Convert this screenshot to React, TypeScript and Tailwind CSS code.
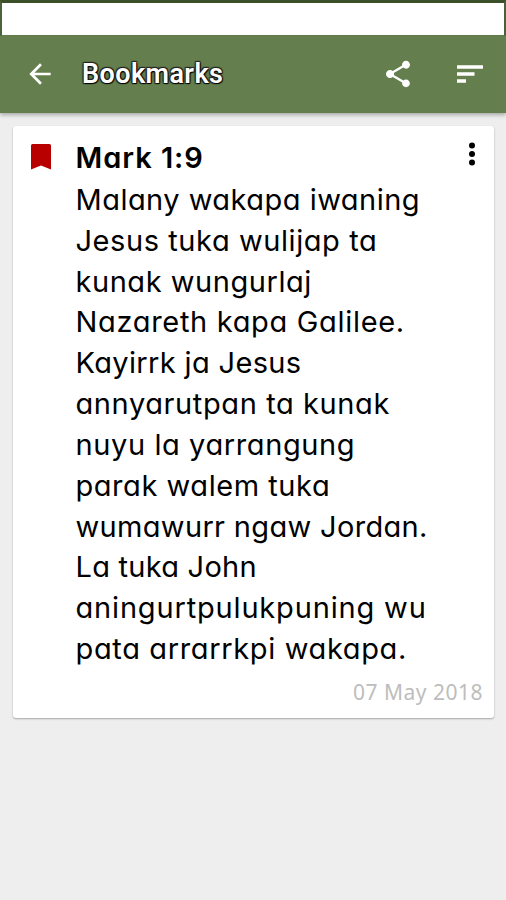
import { clsx } from "clsx";

const verseLines = [
  { text: "Malany wakapa iwaning", tracking: "tracking-[0.47px]" },
  { text: "Jesus tuka wulijap ta", tracking: "tracking-[0.57px]" },
  { text: "kunak wungurlaj", tracking: "tracking-[0.55px]" },
  { text: "Nazareth kapa Galilee.", tracking: "tracking-[0.68px]" },
  { text: "Kayirrk ja Jesus", tracking: "tracking-[0.35px]" },
  { text: "annyarutpan ta kunak", tracking: "tracking-[0.6px]" },
  { text: "nuyu la yarrangung", tracking: "tracking-[0.6px]" },
  { text: "parak walem tuka", tracking: "tracking-[0.55px]" },
  { text: "wumawurr ngaw Jordan.", tracking: "tracking-[0.33px]" },
  { text: "La tuka John", tracking: "tracking-[0.25px]" },
  { text: "aningurtpulukpuning wu", tracking: "tracking-[0.83px]" },
  { text: "pata arrarrkpi wakapa.", tracking: "tracking-[0.64px]" },
];

function Toolbar() {
  return (
    <header className="flex h-[77px] items-center bg-[#647f4d] pb-px text-white shadow-[0_2px_4px_rgba(0,0,0,0.3)]">
      <button aria-label="Back" className="ml-6 size-8">
        <svg viewBox="0 0 24 24" className="size-8" fill="currentColor">
          <path d="M20 11H7.83l5.59-5.59L12 4l-8 8 8 8 1.41-1.41L7.83 13H20v-2z" />
        </svg>
      </button>
      <h1 className="ml-[26px] font-['Roboto',sans-serif] text-[27px] leading-8 font-semibold tracking-[0.4px] [text-shadow:1px_1px_1px_#000,-1px_-1px_1px_#222,1px_-1px_1px_#222,-1px_1px_1px_#222]">
        Bookmarks
      </h1>
      <button aria-label="Share" className="mr-10 ml-auto size-8">
        <svg viewBox="0 0 24 24" className="size-8" fill="currentColor">
          <path d="M18 16.08c-.76 0-1.44.3-1.96.77L8.91 12.7c.05-.23.09-.46.09-.7s-.04-.47-.09-.7l7.05-4.11c.54.5 1.25.81 2.04.81 1.66 0 3-1.34 3-3s-1.34-3-3-3-3 1.34-3 3c0 .24.04.47.09.7L8.04 9.81C7.5 9.31 6.79 9 6 9c-1.66 0-3 1.34-3 3s1.34 3 3 3c.79 0 1.5-.31 2.04-.81l7.12 4.16c-.05.21-.08.43-.08.65 0 1.61 1.31 2.92 2.92 2.92s2.92-1.31 2.92-2.92-1.31-2.92-2.92-2.92z" />
        </svg>
      </button>
      <button aria-label="Sort" className="mr-5 size-8">
        <svg viewBox="0 0 32 32" className="size-8" fill="currentColor">
          <path d="M3 7.2h26v3.6H3zM3 14.2h17.5v3.6H3zM3 21.2h9v3.6H3z" />
        </svg>
      </button>
    </header>
  );
}

function BookmarkCard() {
  return (
    <article className="mr-3 ml-[13px] mt-[13px] flex h-[592px] rounded-[3px] bg-white shadow-[0_1px_2px_rgba(0,0,0,0.3)]">
      <svg viewBox="0 0 20 26" className="mt-[18px] ml-[18px] h-[26px] w-5 shrink-0" fill="#b90000">
        <path d="M0 1.5Q0 0 1.5 0H18.5Q20 0 20 1.5V25.5L10 21.5L0 25.5Z" />
      </svg>
      <div className="ml-[24.5px] flex min-w-0 flex-1 flex-col pt-[11px] font-['Inter','Noto_Sans',sans-serif] text-black [font-feature-settings:'cv11','ss03']">
        <div className="flex h-[43px]">
          <h2 className="text-[29px] leading-[42px] font-semibold tracking-[0.95px] whitespace-nowrap">Mark 1:9</h2>
          <button aria-label="More options" className="mt-[5px] mr-[18.5px] ml-auto h-6 w-2">
            <svg viewBox="0 0 8 24" className="h-6 w-2" fill="currentColor">
              <circle cx="4" cy="3.5" r="3" />
              <circle cx="4" cy="12" r="3" />
              <circle cx="4" cy="20.5" r="3" />
            </svg>
          </button>
        </div>
        <div>
          {verseLines.map((line) => (
            <p key={line.text} className={clsx("text-[29px] leading-[40.82px] whitespace-nowrap", line.tracking)}>
              {line.text}
            </p>
          ))}
        </div>
        <time className="mt-[8px] mr-[11px] self-end font-['Noto_Sans',sans-serif] text-[21px] leading-7 tracking-[0.5px] text-[#bdbdbd]">
          07 May 2018
        </time>
      </div>
    </article>
  );
}

export default function App() {
  return (
    <main className="h-[900px] w-[506px] overflow-hidden bg-[#eeeeee]">
      <div className="h-9 border-x-2 border-t-[3px] border-b border-x-[#49623a] border-t-[#3b5029] border-b-[#647f4d] bg-white" />
      <Toolbar />
      <BookmarkCard />
    </main>
  );
}
